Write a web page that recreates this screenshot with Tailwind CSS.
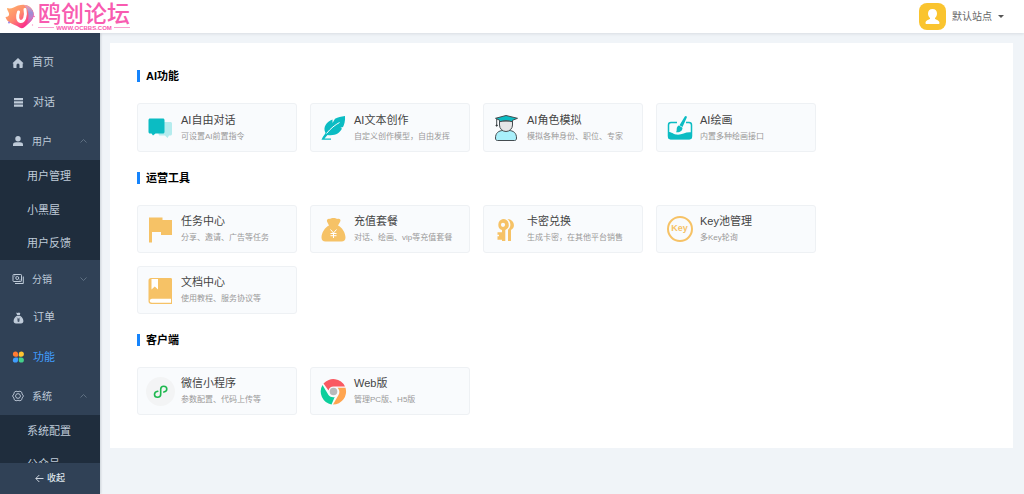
<!DOCTYPE html>
<html lang="zh-CN">
<head>
<meta charset="utf-8">
<meta name="viewport" content="width=device-width, initial-scale=1">
<title>鸥创论坛</title>
<script src="https://cdn.jsdelivr.net/npm/@tailwindcss/browser@4"></script>
</head>
<body class="flex h-screen flex-col overflow-hidden bg-[#f0f4f8] font-['Liberation_Sans','Noto_Sans_CJK_SC',sans-serif] text-[11px] text-[#333]">
<header class="z-10 flex h-[33px] shrink-0 items-center justify-between bg-white pr-5 pl-1 shadow-[0_1px_3px_rgba(0,21,41,0.1)]">
  <a href="#" class="flex items-center gap-[2px] text-[#f85bb0]">
    <svg class="h-[26px] w-8" viewBox="0 0 32 26" aria-hidden="true">
      <defs>
        <linearGradient id="lg1" x1="0" y1="0" x2="1" y2="1"><stop offset="0" stop-color="#ffb86b"/><stop offset=".45" stop-color="#ff8a6c"/><stop offset=".8" stop-color="#fb2d8c"/></linearGradient>
        <linearGradient id="lg2" x1="0" y1="0" x2="0" y2="1"><stop offset="0" stop-color="#f3a0b4"/><stop offset=".35" stop-color="#9a8fd6"/><stop offset=".6" stop-color="#c77cc6"/><stop offset="1" stop-color="#fb2d8c"/></linearGradient>
      </defs>
      <path d="M3 4c4 1.500 7-1 11-2.500 5-1.500 9-1 12 1.500 5 4 5 11 0 15l-6 5.500c-1 .8-3 1-4.500 0C12 21 9 20.500 6.500 19 4 17.500 2 15.500 1.500 13 4 13 5.500 11.500 5 9.500 4.500 7.500 3 6 3 4z" fill="url(#lg1)"/>
      <path d="M20 1c4.500 0 9.500 4 9.500 9.500 0 4-2.500 6.500-4.500 8.500l-4.500 4c5-6 6-16-.5-22z" fill="url(#lg2)"/>
      <path d="M14.500 8c-1.500 4-1.300 9 2 9.500 3.500.3 6-5 4.500-12" fill="none" stroke="#fff" stroke-width="3" stroke-linecap="round"/>
      <circle cx="5" cy="18.500" r=".9" fill="#8f79e8"/><circle cx="30" cy="12.500" r=".8" fill="#fb5aa4"/><circle cx="28.500" cy="21" r=".7" fill="#fb9ac8"/>
    </svg>
    <span class="flex flex-col">
      <span class="text-[23px] leading-[22px] font-medium">鸥创论坛</span>
      <span class="flex items-center gap-[2px] text-[6px] leading-[6px] font-bold"><span class="h-px flex-1 bg-[#f9a0d0]"></span>WWW.OCBBS.COM<span class="h-px flex-1 bg-[#f9a0d0]"></span></span>
    </span>
  </a>
  <button class="flex items-center gap-[6px] text-[10px] text-[#666]">
    <svg class="size-[27px]" viewBox="0 0 27 27" aria-hidden="true"><rect width="27" height="27" rx="8" fill="#fac42e"/><path d="M13.500 6c3 0 4.500 2 4.500 4.500 0 2-1 3.500-2 4.500v1c2 1 4.500 1.500 4.500 4 0 .7-.5 1-1 1h-12c-.5 0-1-.3-1-1 0-2.500 2.500-3 4.500-4v-1c-1-1-2-2.500-2-4.500C9 8 10.500 6 13.500 6z" fill="#fff"/></svg>
    <span>默认站点</span>
    <svg class="h-[3px] w-[6px]" viewBox="0 0 6 3" aria-hidden="true"><path d="M0 0h6L3 3z" fill="#555"/></svg>
  </button>
</header>
<div class="flex min-h-0 flex-1">
  <aside class="flex w-[100px] shrink-0 flex-col bg-[#304156] text-[#bfcbd9] shadow-[1px_0_2px_rgba(0,21,41,0.15)]">
    <nav class="min-h-0 flex-1 overflow-hidden pt-[10px]">
      <a href="#" class="flex h-[39px] items-center gap-2 px-3"><svg class="size-3" viewBox="0 0 12 12" aria-hidden="true"><path d="M6 1l5.300 5c.2.300 0 .5-.3.500h-.3V10c0 .6-.4 1-1 1H7.500V8a1.500 1.500 0 00-3 0v3H2.300c-.6 0-1-.4-1-1V6.500H1c-.3 0-.5-.2-.3-.5z" fill="currentColor"/></svg>首页</a>
      <a href="#" class="flex h-10 items-center gap-[9px] px-3"><svg class="size-3" viewBox="0 0 12 12" aria-hidden="true"><path d="M2 2h9v2.200H2zm0 3.300h9v2.200H2zm0 3.300h9v2.200H2z" fill="currentColor"/></svg>对话</a>
      <button class="flex h-[38px] w-full items-center gap-2 px-3 text-[10px]"><svg class="size-3" viewBox="0 0 12 12" aria-hidden="true"><circle cx="6" cy="3.700" r="2.700" fill="currentColor"/><path d="M1 11V9.500C1 8 2.500 7.200 4 7.200h4c1.500 0 3 .8 3 2.300V11z" fill="currentColor"/></svg>用户<svg class="ml-auto mr-px h-1 w-[7px] text-[#6b7b8d]" viewBox="0 0 7 4" aria-hidden="true"><path d="M.5 3.500l3-3 3 3" fill="none" stroke="currentColor" stroke-width=".8"/></svg></button>
      <div class="flex h-[100px] flex-col bg-[#1f2d3d]">
        <a href="#" class="flex flex-1 items-center pl-[27px]">用户管理</a>
        <a href="#" class="flex flex-1 items-center pl-[27px]">小黑屋</a>
        <a href="#" class="flex flex-1 items-center pl-[27px]">用户反馈</a>
      </div>
      <button class="flex h-[38px] w-full items-center gap-2 px-3 text-[10px]"><svg class="size-3" viewBox="0 0 12 12" fill="none" stroke="currentColor" aria-hidden="true"><rect x="1" y="1.500" width="8.500" height="7" rx=".7"/><circle cx="5.250" cy="5" r="1.500"/><path d="M11.300 3.500v7H3M2.300 3h1M7.500 7h1"/></svg>分销<svg class="ml-auto mr-px h-1 w-[7px] text-[#6b7b8d]" viewBox="0 0 7 4" aria-hidden="true"><path d="M.5.500l3 3 3-3" fill="none" stroke="currentColor" stroke-width=".8"/></svg></button>
      <a href="#" class="flex h-[39px] items-center gap-[9px] px-3"><svg class="size-3" viewBox="0 0 12 12" aria-hidden="true"><path d="M4.500.500l1.200.500L7 .500l1.300.8L7.800 3H5.200l-.8-1.500zM5 3.700h3c2 1 3.400 3.200 3.400 5.300 0 1.600-.8 2.500-2.400 2.500H4c-1.600 0-2.400-.9-2.400-2.500C1.600 6.900 3 4.700 5 3.700z" fill="currentColor"/><path d="M5.200 5.700l1.300 1.500 1.300-1.500M6.500 7.200V10M5.200 7.700h2.600M5.200 8.900h2.600" fill="none" stroke="#304156" stroke-width=".7"/></svg>订单</a>
      <a href="#" aria-current="page" class="flex h-10 items-center gap-[9px] px-3 text-[#409eff]"><svg class="size-3" viewBox="0 0 12 12" aria-hidden="true"><path d="M3.500.500A2.500 2.500 0 016 3v1.500c0 .8-.5 1.200-1.200 1.200H3.500a2.600 2.600 0 010-5.200z" fill="#ff7b33"/><path d="M9.300.500a2.600 2.600 0 010 5.200H7.900c-.8 0-1.200-.4-1.200-1.200V3A2.500 2.500 0 019.300.500z" fill="#ffc531"/><path d="M3.500 6.400h1.300c.8 0 1.200.4 1.200 1.200V9a2.600 2.600 0 11-2.500-2.600z" fill="#409eff"/><path d="M7.900 6.400h1.400A2.600 2.600 0 116.700 9V7.600c0-.8.400-1.200 1.200-1.200z" fill="#45d18b"/></svg>功能</a>
      <button class="flex h-[38px] w-full items-center gap-2 px-3 text-[10px]"><svg class="size-3" viewBox="0 0 12 12" fill="none" stroke="currentColor" stroke-width=".9" aria-hidden="true"><path d="M4 1.200l2 .5 2-.5 1.700 1 .4 1.800L11.500 6l-1.400 2-.4 1.800-1.700 1-2-.5-2 .5-1.700-1L1.900 8 .5 6l1.400-2 .4-1.800z" stroke-linejoin="round"/><path d="M4.700 3.800h2.600L8.600 6 7.300 8.200H4.700L3.400 6z"/></svg>系统<svg class="ml-auto mr-px h-1 w-[7px] text-[#6b7b8d]" viewBox="0 0 7 4" aria-hidden="true"><path d="M.5 3.500l3-3 3 3" fill="none" stroke="currentColor" stroke-width=".8"/></svg></button>
      <div class="bg-[#1f2d3d]">
        <a href="#" class="flex h-[33px] items-center pl-[27px]">系统配置</a>
        <a href="#" class="flex h-[33px] items-center pl-[27px]">公众号</a>
      </div>
    </nav>
    <button class="flex h-[31px] shrink-0 items-center justify-center gap-[3px] bg-[#304156] text-[9px] font-medium text-[#dfe5ec]"><svg class="size-[9px]" viewBox="0 0 9 9" aria-hidden="true"><path d="M8.500 4.500H1M4.300 1L.8 4.500 4.300 8" fill="none" stroke="currentColor" stroke-width=".9"/></svg>收起</button>
  </aside>
  <main class="min-w-0 flex-1 pt-[10px] pr-[11px] pl-[10px]">
    <div class="bg-white px-[27px] pt-[25px] pb-[33px]">
      <section>
        <h2 class="flex h-4 items-center text-[11px] font-bold text-black"><span class="mr-[6px] h-3 w-[3px] bg-[#1684fc]"></span>AI功能</h2>
        <div class="mt-[19px] flex flex-wrap gap-[13px] pr-40">
          <a href="#" class="flex h-[49px] w-[160px] items-center gap-[6px] rounded-[3px] border border-[#eef1f4] bg-[#f9fbfd] px-2">
            <svg class="size-[29px] shrink-0" viewBox="0 0 29 29" aria-hidden="true"><path d="M15 9h9.500c.8 0 1.500.6 1.500 1.500V21c0 .8-.7 1.500-1.500 1.500H23L21.500 25 19 22.500h-5c-.8 0-1.500-.7-1.500-1.500V9z" fill="#b5ecee"/><path d="M4 5.500h13c.8 0 1.500.7 1.500 1.500v12c0 .8-.7 1.500-1.500 1.500H9.500L7 22.500l-1.500-2H4c-.8 0-1.500-.7-1.500-1.500V7c0-.8.7-1.500 1.500-1.500z" fill="#0bbcc3"/></svg>
            <span class="flex flex-col whitespace-nowrap"><span class="leading-[17px] text-[#444]">AI自由对话</span><span class="text-[8px] leading-[15px] text-[#999]">可设置AI前置指令</span></span></a>
          <a href="#" class="flex h-[49px] w-[160px] items-center gap-[6px] rounded-[3px] border border-[#eef1f4] bg-[#f9fbfd] px-2">
            <svg class="size-[29px] shrink-0" viewBox="0 0 29 29" aria-hidden="true"><path d="M26 3c.5 5-1 9-2 11l-2.500.8 1.500.7c-2.500 5-7 7.500-14.500 6.500L5.500 25.500H12v1.200H2.500c1-3 3-4.700 4-6.700-3-6 1-11 7-13.500L13.500 10l2.500-4.200C19 4 22 3.500 26 3z" fill="#0bbcc3"/><path d="M7.500 20.500C12 15 16 12 20.500 9.500" fill="none" stroke="#f9fbfd" stroke-width="1"/></svg>
            <span class="flex flex-col whitespace-nowrap"><span class="leading-[17px] text-[#444]">AI文本创作</span><span class="text-[8px] leading-[15px] text-[#999]">自定义创作模型，自由发挥</span></span></a>
          <a href="#" class="flex h-[49px] w-[160px] items-center gap-[6px] rounded-[3px] border border-[#eef1f4] bg-[#f9fbfd] px-2">
            <svg class="size-[29px] shrink-0" viewBox="0 0 29 29" stroke="#444c50" stroke-linejoin="round" aria-hidden="true"><path d="M3.500 25c0-5 3-7.500 8-7.500h5c5 0 8 2.500 8 7.500 0 1.500-.5 2.500-2 2.500h-17c-1.500 0-2-1-2-2.500z" fill="#a9f0fb"/><path d="M7.500 8v4a6.500 6.500 0 0013 0V8z" fill="#e5e6e7"/><path d="M3.500 5.300L14 2.500l11.500 2.800-5 2v1.500c-4-1.500-9-1.500-13 0V7.200z" fill="#0bbcc3"/><path d="M4.700 6v7" fill="none"/><circle cx="4.700" cy="12.500" r=".7"/></svg>
            <span class="flex flex-col whitespace-nowrap"><span class="leading-[17px] text-[#444]">AI角色模拟</span><span class="text-[8px] leading-[15px] text-[#999]">模拟各种身份、职位、专家</span></span></a>
          <a href="#" class="flex h-[49px] w-[160px] items-center gap-[6px] rounded-[3px] border border-[#eef1f4] bg-[#f9fbfd] px-2">
            <svg class="size-[29px] shrink-0" viewBox="0 0 29 29" aria-hidden="true"><path d="M12 9.500H6c-1.500 0-2.500 1-2.500 2.500v11c0 1.500 1 2.500 2.500 2.500h18c1.500 0 2.500-1 2.500-2.500V12c0-1.500-1-2.500-2.500-2.500h-3" fill="none" stroke="#0bbcc3" stroke-width="1.500"/><path d="M3 19c4 0 5 2 8 2.500 6 1 9-3 16-2v4.500c0 1.500-1 2.500-2.500 2.500h-19C4 26.500 3 25.500 3 24z" fill="#0bbcc3"/><path d="M19.800 3.500c.8-1.300 2.600-.3 2 1L17.500 14l-3-1.800z" fill="#0bbcc3"/><path d="M14 12.500l3.500 2.200c0 3-2.500 5-6.500 4.500 1-1 .5-2.500.8-4.200.3-1.200 1-2.200 2.200-2.500z" fill="#0bbcc3"/></svg>
            <span class="flex flex-col whitespace-nowrap"><span class="leading-[17px] text-[#444]">AI绘画</span><span class="text-[8px] leading-[15px] text-[#999]">内置多种绘画接口</span></span></a>
        </div>
      </section>
      <section class="mt-[18px]">
        <h2 class="flex h-4 items-center text-[11px] font-bold text-black"><span class="mr-[6px] h-3 w-[3px] bg-[#1684fc]"></span>运营工具</h2>
        <div class="mt-[19px] flex flex-wrap gap-[13px] pr-40">
          <a href="#" class="flex h-[48px] w-[160px] items-center gap-[6px] rounded-[3px] border border-[#eef1f4] bg-[#f9fbfd] px-2">
            <svg class="size-[29px] shrink-0" viewBox="0 0 29 29" aria-hidden="true"><path d="M3 2.500h13.500V5H26v15H15v-3H6v10.500H3z" fill="#f6c266"/></svg>
            <span class="flex flex-col whitespace-nowrap"><span class="leading-[17px] text-[#444]">任务中心</span><span class="text-[8px] leading-[15px] text-[#999]">分享、邀请、广告等任务</span></span></a>
          <a href="#" class="flex h-[48px] w-[160px] items-center gap-[6px] rounded-[3px] border border-[#eef1f4] bg-[#f9fbfd] px-2">
            <svg class="size-[29px] shrink-0" viewBox="0 0 29 29" aria-hidden="true"><path d="M8 6.500c-.5-2 1-3 3-2.500 1.500-1.300 5.500-1.300 7 0 2.500-1 4.500.5 3 3L19 10.500c4 1.500 7.500 7.500 7.500 12 0 2.500-1.500 4-4 4h-16c-2.500 0-4-1.500-4-4 0-4.500 3.500-10.500 7.500-12z" fill="#f6c266"/><path d="M11.500 14.500l3 3.500 3-3.500M14.500 18v5M11.500 18.500h6M11.500 20.700h6" fill="none" stroke="#fff" stroke-width="1"/></svg>
            <span class="flex flex-col whitespace-nowrap"><span class="leading-[17px] text-[#444]">充值套餐</span><span class="text-[8px] leading-[15px] text-[#999]">对话、绘画、vip等充值套餐</span></span></a>
          <a href="#" class="flex h-[48px] w-[160px] items-center gap-[6px] rounded-[3px] border border-[#eef1f4] bg-[#f9fbfd] px-2">
            <svg class="size-[29px] shrink-0" viewBox="0 0 29 29" aria-hidden="true"><path fill-rule="evenodd" d="M11 4a5.800 5.800 0 012.300 11.100V26h-3.300v-1.200H5.500v-3.500H7v-1.500H5.500v-2.500H10v-2.200A5.800 5.800 0 0111 4zm0 3.700a2 2 0 100 4.200 2 2 0 000-4.200z" fill="#f6c266"/><path d="M15.500 4c7 .5 8.500 8.500 3.500 11V26h-3V14.800c3-2.500 3.500-7.500-.5-10.800z" fill="#f6c266"/></svg>
            <span class="flex flex-col whitespace-nowrap"><span class="leading-[17px] text-[#444]">卡密兑换</span><span class="text-[8px] leading-[15px] text-[#999]">生成卡密，在其他平台销售</span></span></a>
          <a href="#" class="flex h-[48px] w-[160px] items-center gap-[6px] rounded-[3px] border border-[#eef1f4] bg-[#f9fbfd] px-2">
            <span class="flex size-[29px] shrink-0 items-center justify-center"><span class="flex size-[26px] items-center justify-center rounded-full border-2 border-[#f6c266] text-[9px] font-bold text-[#f6c266]">Key</span></span>
            <span class="flex flex-col whitespace-nowrap"><span class="leading-[17px] text-[#444]">Key池管理</span><span class="text-[8px] leading-[15px] text-[#999]">多Key轮询</span></span></a>
          <a href="#" class="flex h-[48px] w-[160px] items-center gap-[6px] rounded-[3px] border border-[#eef1f4] bg-[#f9fbfd] px-2">
            <svg class="size-[29px] shrink-0" viewBox="0 0 29 29" aria-hidden="true"><path d="M5 2h19.500c1 0 1.500.5 1.500 1.500V28H5.500A2.800 2.800 0 012.500 25V4.500C2.500 3 3.500 2 5 2z" fill="#f6c266"/><path d="M5.500 3H12v10.500l-3.200-3-3.300 3zM25 22.700H6c-3 0-3 4 0 4h19z" fill="#fff"/></svg>
            <span class="flex flex-col whitespace-nowrap"><span class="leading-[17px] text-[#444]">文档中心</span><span class="text-[8px] leading-[15px] text-[#999]">使用教程、服务协议等</span></span></a>
        </div>
      </section>
      <section class="mt-[18px]">
        <h2 class="flex h-4 items-center text-[11px] font-bold text-black"><span class="mr-[6px] h-3 w-[3px] bg-[#1684fc]"></span>客户端</h2>
        <div class="mt-[19px] flex flex-wrap gap-[13px] pr-40">
          <a href="#" class="flex h-[48px] w-[160px] items-center gap-[6px] rounded-[3px] border border-[#eef1f4] bg-[#f9fbfd] px-2">
            <svg class="size-[29px] shrink-0" viewBox="0 0 29 29" aria-hidden="true"><circle cx="14.500" cy="14.500" r="14.500" fill="#f3f4f5"/><path d="M11.800 14.300c-2.400.4-3.300 1.800-3.300 3.200 0 1.600 1.300 2.700 3 2.700 1.800 0 3.200-1.200 3.200-3v-5c0-1.800 1.300-3 3-3 1.800 0 3.100 1.100 3.100 2.700 0 1.400-1 2.700-3 3.100" fill="none" stroke="#1eb84f" stroke-width="1.600" stroke-linecap="round"/></svg>
            <span class="flex flex-col whitespace-nowrap"><span class="leading-[17px] text-[#444]">微信小程序</span><span class="text-[8px] leading-[15px] text-[#999]">参数配置、代码上传等</span></span></a>
          <a href="#" class="flex h-[48px] w-[160px] items-center gap-[6px] rounded-[3px] border border-[#eef1f4] bg-[#f9fbfd] px-2">
            <svg class="size-[29px] shrink-0" viewBox="0 0 29 29" aria-hidden="true"><path d="M4.500 6.500A13 13 0 0126 9.500H14.500c-2.500 0-4.500 1.500-5 4z" fill="#fa5a62"/><path d="M3.500 8l6 10c1.500 2 4 2.500 6.200 2L12.500 27.400A13 13 0 013.500 8z" fill="#0ccf9c"/><path d="M18.500 10.700h8A13 13 0 0114 27.500L19.500 18c1.500-2.500 1-5.500-1-7.300z" fill="#ffa550"/><circle cx="14.500" cy="14.500" r="3.800" fill="#b9babb"/></svg>
            <span class="flex flex-col whitespace-nowrap"><span class="leading-[17px] text-[#444]">Web版</span><span class="text-[8px] leading-[15px] text-[#999]">管理PC版、H5版</span></span></a>
        </div>
      </section>
    </div>
  </main>
</div>
</body>
</html>
